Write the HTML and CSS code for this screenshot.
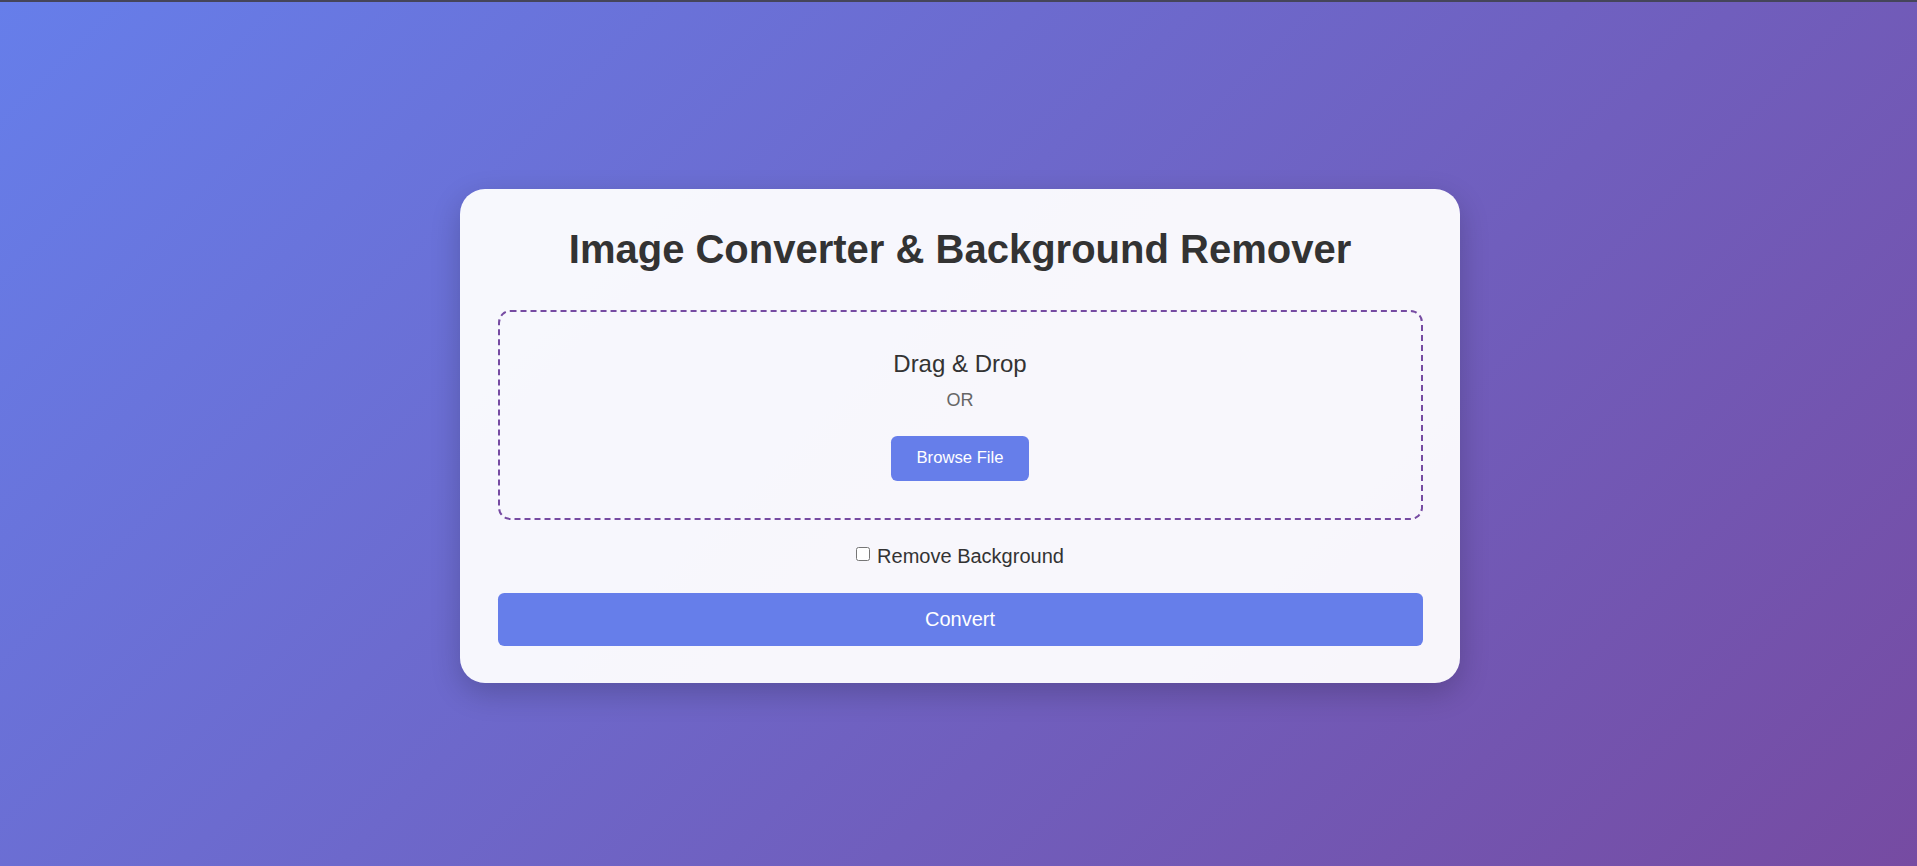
FILE: index.html
```html
<!DOCTYPE html>
<html lang="en">
<head>
<meta charset="utf-8">
<title>Image Converter &amp; Background Remover</title>
<link rel="stylesheet" href="styles.css">
</head>
<body>
<main class="page">
  <section class="card">
    <h1 class="title">Image Converter &amp; Background Remover</h1>
    <div class="dropzone">
      <p class="drop-text">Drag &amp; Drop</p>
      <p class="or-text">OR</p>
      <button class="browse-btn" type="button">Browse File</button>
    </div>
    <label class="option"><input class="option-check" type="checkbox"><span class="option-text">Remove Background</span></label>
    <button class="convert-btn" type="button">Convert</button>
  </section>
</main>
</body>
</html>
```

FILE: styles.css
```css
* {
  box-sizing: border-box;
}

html, body {
  margin: 0;
  padding: 0;
  height: 100%;
}

body {
  font-family: "Liberation Sans", Arial, sans-serif;
  background: linear-gradient(135deg, #667eea 0%, #764ba2 100%);
  border-top: 2px solid #45455a;
  overflow: hidden;
}

.page {
  height: 100%;
  display: flex;
  align-items: center;
  justify-content: center;
  padding: 4px 0 0 3px;
}

.card {
  width: 1000px;
  background: rgba(255, 255, 255, 0.95);
  border-radius: 25px;
  padding: 37px 37.5px;
  box-shadow: 0 10px 30px rgba(0, 0, 0, 0.2);
  display: flex;
  flex-direction: column;
  align-items: stretch;
}

.title {
  margin: 0 0 38px;
  font-size: 40px;
  font-weight: bold;
  color: #333;
  text-align: center;
  line-height: 46px;
}

.dropzone {
  border: 2px dashed #764ba2;
  border-radius: 12.5px;
  padding: 38px 20px 37px;
  display: flex;
  flex-direction: column;
  align-items: center;
}

.drop-text {
  margin: 0 0 12px;
  font-size: 24px;
  line-height: 27.6px;
  color: #333;
}

.or-text {
  margin: 0;
  font-size: 18px;
  line-height: 20.7px;
  color: #666;
}

.browse-btn {
  margin-top: 25px;
  border: none;
  background: #667eea;
  color: #fff;
  font-family: "Liberation Sans", Arial, sans-serif;
  font-size: 16.67px;
  line-height: 20px;
  padding: 12.5px 25px;
  border-radius: 6.25px;
  cursor: pointer;
}

.option {
  margin: 25px 0;
  align-self: center;
  display: flex;
  align-items: center;
  gap: 7px;
  font-size: 20px;
  line-height: 23px;
  color: #333;
}

.option-check {
  width: 14px;
  height: 14px;
  margin: 0;
  position: relative;
  top: -2px;
}

.convert-btn {
  width: 100%;
  border: none;
  background: #667eea;
  color: #fff;
  font-family: "Liberation Sans", Arial, sans-serif;
  font-size: 20px;
  line-height: 23px;
  padding: 15px;
  border-radius: 6.25px;
  cursor: pointer;
}
```
